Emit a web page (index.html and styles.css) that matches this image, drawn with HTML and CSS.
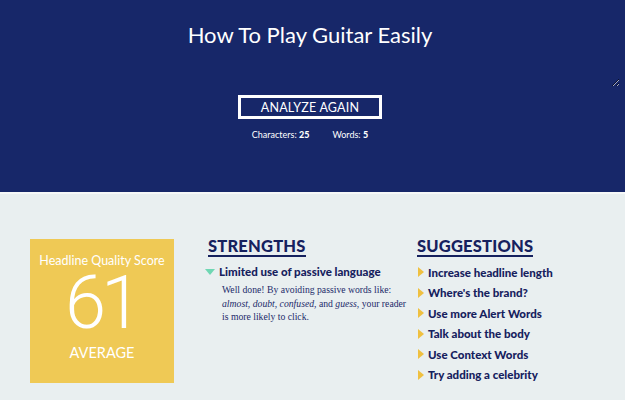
FILE: index.html
```html
<!DOCTYPE html>
<html lang="en">
<head>
    <meta charset="UTF-8">
    <meta name="viewport" content="width=device-width, initial-scale=1.0">
    <title>Headline Analyzer</title>
    <link rel="stylesheet" href="styles.css">
</head>
<body>
    <header class="hero">
        <textarea class="headline-input" readonly>How To Play Guitar Easily</textarea>
        <button class="analyze-btn" type="button">ANALYZE AGAIN</button>
        <div class="counts">
            <span>Characters: <strong>25</strong></span>
            <span>Words: <strong>5</strong></span>
        </div>
    </header>

    <main class="results">
        <div class="score-box">
            <div class="score-label">Headline Quality Score</div>
            <div class="score-value">61</div>
            <div class="score-grade">AVERAGE</div>
        </div>

        <section class="strengths">
            <h2>STRENGTHS</h2>
            <div class="strength-item">
                <div class="strength-title"><span class="tri-down"></span>Limited use of passive language</div>
                <p class="strength-text">Well done! By avoiding passive words like:<br><em>almost</em>, <em>doubt</em>, <em>confused</em>, and <em>guess</em>, your reader<br>is more likely to click.</p>
            </div>
        </section>

        <section class="suggestions">
            <h2>SUGGESTIONS</h2>
            <ul>
                <li><span class="tri-right"></span>Increase headline length</li>
                <li><span class="tri-right"></span>Where's the brand?</li>
                <li><span class="tri-right"></span>Use more Alert Words</li>
                <li><span class="tri-right"></span>Talk about the body</li>
                <li><span class="tri-right"></span>Use Context Words</li>
                <li><span class="tri-right"></span>Try adding a celebrity</li>
            </ul>
        </section>
    </main>
</body>
</html>
```

FILE: styles.css
```css
body {
    margin: 0;
    padding: 0;
    font-family: Lato, "Open Sans", sans-serif;
    background-color: #e9eff0;
    color: #16215e;
}

.hero {
    height: 194px;
    box-sizing: border-box;
    background: #172769;
    border-bottom: 2px solid #f6f8f8;
    padding: 12px 5px 0 0;
    display: flex;
    flex-direction: column;
    align-items: center;
}

.headline-input {
    display: block;
    width: 100%;
    height: 75px;
    box-sizing: border-box;
    margin: 0;
    padding: 9px 0 0;
    background: transparent;
    border: none;
    outline: none;
    color: #fff;
    font-family: Lato, sans-serif;
    font-weight: 400;
    font-size: 22px;
    text-align: center;
    overflow: hidden;
}

.analyze-btn {
    margin-top: 8px;
    width: 144px;
    height: 24px;
    background: #172769;
    border: 3px solid #fff;
    color: #fff;
    font-family: Lato, sans-serif;
    font-size: 12.5px;
    letter-spacing: 0.2px;
    padding: 0;
    cursor: pointer;
}

.counts {
    margin-top: 10px;
    display: flex;
    gap: 23px;
    color: #fff;
    font-size: 9px;
}

.counts strong {
    font-weight: 900;
}

.results {
    display: flex;
    padding: 45px 0 0 30px;
}

.score-box {
    width: 144px;
    height: 144px;
    flex-shrink: 0;
    background: #efc955;
    color: #fff;
    text-align: center;
    box-sizing: border-box;
    padding-top: 14px;
}

.score-label {
    font-size: 12.5px;
}

.score-value {
    font-family: Roboto, Lato, sans-serif;
    font-size: 74px;
    font-weight: 300;
    letter-spacing: -5px;
    line-height: 72px;
    margin-top: -1px;
    padding-right: 2px;
}

.score-grade {
    font-size: 14.5px;
    margin-top: 5px;
}

.strengths,
.suggestions {
    display: flex;
    flex-direction: column;
    align-items: flex-start;
}

h2 {
    margin: -2px 0 0;
    font-size: 16.5px;
    font-weight: 900;
    letter-spacing: 0.2px;
    line-height: 18px;
    border-bottom: 2px solid #16215e;
}

.strengths {
    width: 212px;
    min-width: 0;
    flex-shrink: 0;
    margin-left: 31px;
    box-sizing: border-box;
    padding-left: 3px;
}

.strength-item {
    margin-top: 8px;
}

.strength-title {
    font-size: 11.5px;
    font-weight: 900;
    margin-left: -3px;
    display: flex;
    align-items: center;
}

.tri-down {
    width: 0;
    height: 0;
    border-left: 5px solid transparent;
    border-right: 5px solid transparent;
    border-top: 6px solid #6fd7b3;
    margin-right: 4px;
}

.strength-text {
    margin: 5px 0 0 14px;
    font-family: "Liberation Serif", serif;
    font-size: 9.7px;
    line-height: 13.7px;
    white-space: nowrap;
    color: #232b6a;
}

.suggestions ul {
    list-style: none;
    margin: 5px 0 0;
    padding: 0;
}

.suggestions li {
    font-size: 11.5px;
    font-weight: 900;
    height: 20.5px;
    display: flex;
    align-items: center;
}

.tri-right {
    width: 0;
    height: 0;
    border-top: 5px solid transparent;
    border-bottom: 5px solid transparent;
    border-left: 6px solid #efc040;
    margin: 0 4px 0 1px;
}
```
